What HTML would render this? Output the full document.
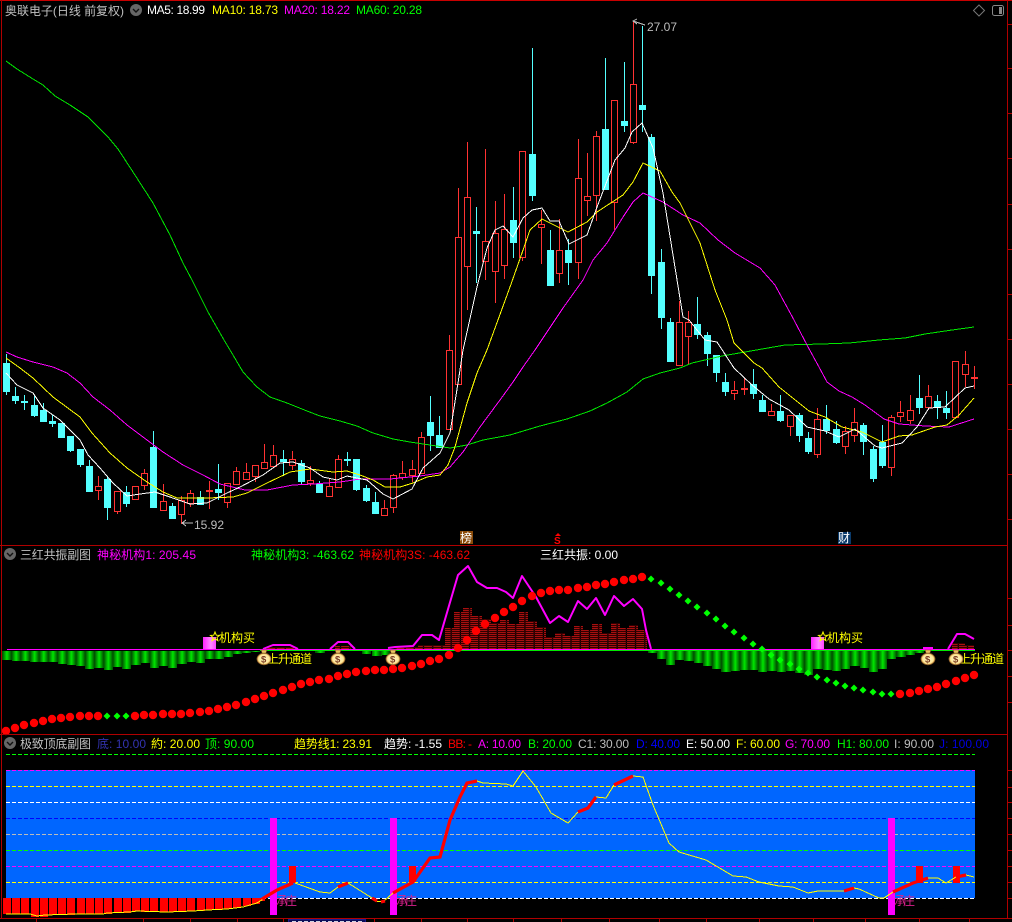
<!DOCTYPE html>
<html><head><meta charset="utf-8"><title>奥联电子</title>
<style>
html,body{margin:0;padding:0;background:#000;width:1012px;height:922px;overflow:hidden}
svg{display:block}
text{font-family:"Liberation Sans","Noto Sans CJK SC",sans-serif;font-size:12px}
</style></head><body>
<svg width="1012" height="922" viewBox="0 0 1012 922" xmlns="http://www.w3.org/2000/svg">
<defs>
<linearGradient id="gg"><stop offset="0" stop-color="#004c00"/><stop offset=".5" stop-color="#00e600"/><stop offset="1" stop-color="#004c00"/></linearGradient>
<pattern id="gp" patternUnits="userSpaceOnUse" x="2.3" y="0" width="9.22" height="10"><rect width="9.22" height="10" fill="url(#gg)"/></pattern>
<pattern id="rp" patternUnits="userSpaceOnUse" x="0" y="0" width="9.22" height="2"><rect width="8" height="1" fill="#a81010"/><rect y="1" width="9.22" height="1" fill="#300000"/></pattern>
<linearGradient id="pk"><stop offset="0" stop-color="#ff22ff"/><stop offset=".6" stop-color="#ff88ff"/><stop offset="1" stop-color="#ff44ff"/></linearGradient>
<radialGradient id="bag"><stop offset="0" stop-color="#fff4c8"/><stop offset=".75" stop-color="#ffe89a"/><stop offset="1" stop-color="#d8a040"/></radialGradient>
</defs>
<rect width="1012" height="922" fill="#000"/>

<!-- candles -->
<g shape-rendering="crispEdges">
<path fill="none" stroke="#ff3232" d="M98.5 476V500M117.5 491V514M144.5 469V490M163.5 484V510M181.5 496V524M190.5 490V507M209.5 481V509M227.5 483V508M236.5 467V485M246.5 463V480M255.5 465V482M264.5 444V468M273.5 445V466M292.5 451V470M310.5 466V486M329.5 479V497M338.5 455V487M384.5 500V515M393.5 474V513M402.5 461V480M412.5 460V482M421.5 432V473M449.5 335V429M458.5 188V384M467.5 142V310M485.5 149V280M495.5 201V303M504.5 194V279M522.5 151V261M541.5 210V264M559.5 219V283M578.5 139V279M587.5 153V216M596.5 131V221M614.5 100V230M633.5 22V144M679.5 301V365M688.5 311V365M734.5 381V400M744.5 378V395M771.5 404V416M790.5 415V436M817.5 408V458M845.5 426V454M854.5 408V442M891.5 415V476M900.5 401V422M910.5 395V424M928.5 385V410M965.5 351V387M974.5 366V389"/>
<path fill="#000" stroke="#ff3232" d="M95.5 486.5h6v4h-6zM114.5 454.5h0M114.5 491.5h6v20h-6zM132.5 486.5h6v13h-6zM141.5 473.5h6v12h-6zM160.5 501.5h6v9h-6zM178.5 500.5h6v14h-6zM187.5 493.5h6v10h-6zM224.5 483.5h6v19h-6zM233.5 471.5h6v13h-6zM243.5 472.5h6v7h-6zM252.5 465.5h6v11h-6zM261.5 462.5h6v6h-6zM270.5 455.5h6v11h-6zM289.5 459.5h6v6h-6zM307.5 480.5h6v3h-6zM326.5 486.5h6v10h-6zM335.5 459.5h6v28h-6zM381.5 508.5h6v7h-6zM390.5 475.5h6v32h-6zM399.5 473.5h6v4h-6zM409.5 469.5h6v6h-6zM418.5 437.5h6v36h-6zM446.5 350.5h6v79h-6zM455.5 237.5h6v147h-6zM464.5 197.5h6v69h-6zM482.5 241.5h6v20h-6zM492.5 233.5h6v38h-6zM501.5 229.5h6v36h-6zM519.5 151.5h6v106h-6zM538.5 224.5h6v3h-6zM556.5 250.5h6v23h-6zM575.5 178.5h6v84h-6zM584.5 196.5h6v4h-6zM593.5 136.5h6v59h-6zM611.5 100.5h6v102h-6zM630.5 84.5h6v58h-6zM676.5 322.5h6v43h-6zM685.5 322.5h6v14h-6zM731.5 390.5h6v3h-6zM768.5 411.5h6v4h-6zM787.5 415.5h6v11h-6zM814.5 419.5h6v35h-6zM842.5 431.5h6v15h-6zM851.5 422.5h6v13h-6zM888.5 417.5h6v50h-6zM897.5 412.5h6v4h-6zM907.5 410.5h6v10h-6zM925.5 396.5h6v11h-6zM952.5 361.5h6v56h-6zM962.5 364.5h6v10h-6z"/>
<path fill="#ff3232" d="M206 490h7v2h-7zM741 388h7v2h-7zM971 377h7v2h-7z"/>
<path fill="none" stroke="#54ffff" d="M6.5 354V395M15.5 387V404M24.5 395V410M34.5 396V417M43.5 403V422M52.5 415V427M70.5 436V452M80.5 449V467M89.5 460V492M107.5 476V520M126.5 486V507M153.5 431V508M172.5 503V519M200.5 491V505M218.5 464V500M283.5 450V476M301.5 460V484M319.5 481V493M347.5 452V466M356.5 459V491M366.5 485V502M375.5 492V514M430.5 396V451M439.5 416V448M476.5 207V283M513.5 187V258M532.5 48V201M550.5 230V286M568.5 239V285M605.5 58V190M624.5 62V132M642.5 26V132M651.5 134V294M661.5 249V329M670.5 318V362M697.5 297V339M707.5 332V366M716.5 355V382M725.5 373V396M753.5 369V399M762.5 395V412M780.5 395V422M799.5 413V442M808.5 432V454M826.5 405V434M836.5 421V444M863.5 423V455M873.5 446V482M882.5 425V468M919.5 375V414M937.5 395V419M946.5 391V419"/>
<path fill="#54ffff" d="M3 363h7v29h-7zM12 396h7v5h-7zM21 401h7v2h-7zM31 405h7v11h-7zM40 410h7v12h-7zM49 421h7v3h-7zM58 423h7v15h-7zM67 436h7v15h-7zM77 449h7v16h-7zM86 466h7v26h-7zM104 479h7v29h-7zM123 492h7v12h-7zM150 447h7v61h-7zM169 506h7v13h-7zM197 497h7v8h-7zM215 489h7v4h-7zM280 459h7v3h-7zM298 463h7v19h-7zM316 484h7v9h-7zM344 459h7v2h-7zM353 459h7v31h-7zM363 488h7v13h-7zM372 502h7v12h-7zM427 422h7v14h-7zM436 435h7v13h-7zM473 231h7v3h-7zM510 220h7v23h-7zM529 154h7v42h-7zM547 250h7v36h-7zM565 250h7v13h-7zM602 129h7v61h-7zM621 121h7v5h-7zM639 105h7v5h-7zM648 137h7v139h-7zM658 262h7v56h-7zM667 322h7v40h-7zM694 324h7v11h-7zM704 335h7v19h-7zM713 355h7v18h-7zM722 382h7v10h-7zM750 384h7v10h-7zM759 400h7v12h-7zM777 411h7v10h-7zM796 415h7v21h-7zM805 438h7v14h-7zM823 419h7v12h-7zM833 429h7v14h-7zM860 425h7v17h-7zM870 449h7v30h-7zM879 442h7v24h-7zM916 398h7v10h-7zM934 401h7v6h-7zM943 408h7v5h-7z"/>

<!-- MA lines -->
<g fill="none">
<path stroke="#00e800" d="M6 61L17 69L33 79L43 85L55 96L70 105L88 117L108 137L118 149L133 172L153 203L170 235L183 263L192 280L208 312L224 340L233 355L243 372L257 387L270 397L287 403L307 411L320 416L340 421L357 426L373 433L393 439L410 442L430 445L450 448L467 445L483 440L510 435L540 426L567 419L590 411L607 403L627 392L643 379L660 373L680 368L692 363L722 356L745 352L785 345L822 344L849 343L879 340L905 338L925 334L952 330L974 327"/>
<path stroke="#ff00ff" d="M6 352L17 357L33 362L53 367L67 373L80 383L93 397L110 410L127 425L147 440L163 452L183 465L203 475L220 484L245 490L267 490L293 485L313 484L340 482L360 479L390 479L420 476L440 473L450 467L463 452L480 427L500 400L513 382L523 367L535 350L563 308L583 280L593 260L607 243L623 217L633 202L643 193L663 202L683 215L700 223L718 240L735 253L760 268L775 285L794 320L807 345L819 367L827 382L839 391L852 397L865 405L884 419L899 424L925 426L949 427L974 419"/>
<path stroke="#ffff00" d="M6 358L20 368L33 378L53 397L80 417L92 433L110 453L127 468L147 482L163 492L177 498L207 498L233 497L247 493L267 483L290 472L310 469L333 472L347 471L360 475L373 480L385 487L400 487L413 483L427 477L440 475L448 465L455 447L467 403L477 373L487 350L510 287L522 253L530 230L542 219L568 232L587 222L597 212L623 195L633 182L643 163L660 171L672 192L680 203L700 243L715 290L727 320L734 343L754 363L762 368L779 387L799 403L809 411L825 417L842 427L862 432L882 442L899 436L912 435L935 427L947 425L959 415L974 398"/>
<path stroke="#fff" d="M6 373L17 385L33 393L43 408L60 420L80 440L88 455L100 468L113 483L127 496L140 494L155 492L170 497L190 504L207 503L227 493L240 487L263 475L280 463L293 462L310 468L323 477L337 480L347 476L367 480L383 494L393 499L412 489L423 468L440 453L450 433L458 383L463 350L477 287L487 248L495 230L503 226L513 237L523 218L532 210L542 208L550 221L559 221L569 244L587 235L597 207L615 160L625 148L632 132L642 123L653 148L663 193L683 317L689 320L705 340L717 342L734 368L752 385L769 399L789 410L807 427L825 431L839 437L855 429L875 446L882 448L902 443L917 427L929 408L945 407L965 388L974 386"/>
<path stroke="#bdbdbd" d="M182 523H193M186 520L182 523L186 526M645 25L633 21M637 19L633 21L637 24"/>
</g>
</g>

<text x="647" y="31" fill="#bdbdbd" textLength="30">27.07</text>
<text x="194" y="529" fill="#bdbdbd" textLength="30">15.92</text>

<!-- markers main -->
<rect x="460" y="531" width="13" height="13" fill="#8a4a08"/>
<text x="460" y="542" fill="#fff" font-size="12" style="font-size:12px">榜</text>
<path d="M558 533l3 3h-6z" fill="#f00"/>
<text x="554" y="544" fill="#f00" style="font-size:10px;font-weight:bold">S</text>
<rect x="838" y="532" width="13" height="12" fill="#0a3a6a"/>
<text x="838" y="542" fill="#fff" style="font-size:12px">财</text>

<!-- panel 1 header -->
<circle cx="136" cy="10" r="6" fill="#666"/><path d="M133 9l3 3 3-3" fill="none" stroke="#111" stroke-width="1.4"/>
<text x="5" y="15" fill="#c0c0c0" textLength="119">奥联电子(日线 前复权)</text>
<text x="147" y="14" fill="#fff" textLength="58">MA5: 18.99</text>
<text x="212" y="14" fill="#ff0" textLength="66">MA10: 18.73</text>
<text x="284" y="14" fill="#f0f" textLength="66">MA20: 18.22</text>
<text x="356" y="14" fill="#0f0" textLength="66">MA60: 20.28</text>
<path d="M979 5l5.5 5.5-5.5 5.5-5.5-5.5z" fill="none" stroke="#777"/>
<rect x="992.5" y="5.5" width="11" height="10" rx="2" fill="#000" stroke="#888"/><rect x="999" y="7" width="3" height="7" fill="#888"/>

<!-- panel 2 -->
<g shape-rendering="crispEdges">
<path fill="url(#rp)" d="M265 647h30v2h-30zM335 646h16v3h-16zM395 647h23v2h-23zM418 645h27v4h-27zM445 628h9v21h-9zM454 612h9v37h-9zM463 608h9v41h-9zM472 616h10v33h-10zM482 619h9v30h-9zM491 623h9v26h-9zM500 620h9v29h-9zM509 624h10v25h-10zM519 612h9v37h-9zM528 621h9v28h-9zM537 627h9v22h-9zM546 637h9v12h-9zM555 633h10v16h-10zM565 636h9v13h-9zM574 626h9v23h-9zM583 630h9v19h-9zM592 624h10v25h-10zM602 633h9v16h-9zM611 623h9v26h-9zM620 628h9v21h-9zM629 625h9v24h-9zM638 630h9v19h-9zM952 643h13v6h-13zM965 645h9v4h-9z"/>
<path fill="url(#gp)" d="M2 651h10v9h-10zM12 651h9v10h-9zM21 651h9v10h-9zM30 651h9v11h-9zM39 651h9v11h-9zM48 651h10v11h-10zM58 651h9v13h-9zM67 651h9v14h-9zM76 651h9v15h-9zM85 651h9v18h-9zM94 651h10v17h-10zM104 651h9v19h-9zM113 651h9v16h-9zM122 651h9v18h-9zM131 651h10v14h-10zM141 651h9v12h-9zM150 651h9v17h-9zM159 651h9v15h-9zM168 651h9v17h-9zM177 651h10v13h-10zM187 651h9v11h-9zM196 651h9v12h-9zM205 651h9v8h-9zM214 651h10v8h-10zM224 651h9v6h-9zM233 651h9v3h-9zM242 651h9v2h-9zM251 651h9v1h-9zM315 651h10v2h-10zM362 651h9v3h-9zM372 651h10v5h-10zM382 651h8v4h-8zM648 651h9v2h-9zM657 651h9v8h-9zM666 651h9v14h-9zM675 651h9v9h-9zM684 651h10v10h-10zM694 651h9v12h-9zM703 651h9v15h-9zM712 651h9v18h-9zM721 651h10v21h-10zM731 651h9v20h-9zM740 651h9v19h-9zM749 651h9v19h-9zM758 651h9v21h-9zM767 651h10v20h-10zM777 651h9v21h-9zM786 651h9v20h-9zM795 651h9v22h-9zM804 651h9v24h-9zM813 651h10v18h-10zM823 651h9v19h-9zM832 651h9v20h-9zM841 651h9v18h-9zM850 651h10v15h-10zM860 651h9v17h-9zM869 651h9v21h-9zM878 651h9v18h-9zM887 651h9v8h-9zM896 651h10v6h-10zM906 651h9v4h-9zM915 651h9v2h-9z"/>
<path stroke="#00e800" d="M260 650.5H975"/>
<path stroke="#f0f" d="M7 649.5H975"/>
<rect x="203" y="637" width="13" height="12" fill="url(#pk)"/>
<rect x="811" y="637" width="13" height="12" fill="url(#pk)"/>
</g>
<path fill="none" stroke="#f0f" stroke-width="2" stroke-linejoin="round" d="M263 649L273 645L290 645L298 649M330 649L338 642L348 642L355 649M388 648L395 647L413 646L422 635L432 635L439 640L458 575L468 566L477 582L487 588L497 588L506 592L513 598L522 576L536 597L550 623L559 616L568 622L578 601L587 609L596 598L605 615L614 596L624 606L633 599L642 609L646 630L651 649M948 649L957 634L965 634L974 639M923 648H933"/>
<path fill="none" stroke="#f00" stroke-width="8.4" stroke-linecap="round" d="M6 731h0M15 728h0M24 725h0M34 723h0M43 721h0M52 719h0M61 718h0M70 717h0M80 716h0M89 716h0M98 716h0M135 716h0M144 715h0M153 715h0M163 714h0M172 714h0M181 714h0M190 713h0M200 712h0M209 711h0M218 709h0M227 707h0M236 705h0M246 702h0M255 699h0M264 696h0M273 693h0M283 690h0M292 687h0M301 684h0M310 682h0M319 680h0M329 679h0M338 676h0M347 674h0M356 672h0M366 671h0M375 670h0M384 670h0M393 669h0M402 668h0M412 666h0M421 664h0M430 661h0M439 659h0M449 655h0M458 648h0M467 640h0M476 631h0M485 624h0M495 618h0M504 612h0M513 607h0M522 601h0M532 596h0M541 593h0M550 591h0M559 590h0M568 590h0M578 588h0M587 587h0M596 585h0M605 584h0M614 582h0M624 580h0M633 579h0M642 577h0M900 694h0M910 693h0M919 691h0M928 689h0M937 687h0M946 684h0M956 681h0M965 678h0M974 675h0"/>
<path fill="#0f0" d="M107 712.500l3.500 3.500-3.500 3.500-3.500-3.500zM117 712.500l3.500 3.500-3.500 3.500-3.500-3.500zM126 712.500l3.500 3.500-3.500 3.500-3.500-3.500zM651 575.500l3.500 3.500-3.500 3.500-3.500-3.500zM661 579.500l3.500 3.500-3.500 3.500-3.500-3.500zM670 585.500l3.500 3.500-3.500 3.500-3.500-3.500zM679 591.500l3.500 3.500-3.500 3.500-3.500-3.500zM688 597.500l3.500 3.500-3.500 3.500-3.500-3.500zM697 603.500l3.500 3.500-3.500 3.500-3.500-3.500zM707 609.500l3.500 3.500-3.500 3.500-3.500-3.500zM716 615.500l3.500 3.500-3.500 3.500-3.500-3.500zM725 622.500l3.500 3.500-3.500 3.500-3.500-3.500zM734 628.500l3.500 3.500-3.500 3.500-3.500-3.500zM744 634.500l3.500 3.500-3.500 3.500-3.500-3.500zM753 640.500l3.500 3.500-3.500 3.500-3.500-3.500zM762 645.500l3.500 3.500-3.500 3.500-3.500-3.500zM771 651.500l3.500 3.500-3.500 3.500-3.500-3.500zM780 656.500l3.500 3.500-3.500 3.500-3.500-3.500zM790 660.500l3.500 3.500-3.500 3.500-3.500-3.500zM799 665.500l3.500 3.500-3.500 3.500-3.500-3.500zM808 669.500l3.500 3.500-3.500 3.500-3.500-3.500zM817 673.500l3.500 3.500-3.500 3.500-3.500-3.500zM827 676.500l3.500 3.500-3.500 3.500-3.500-3.500zM836 679.500l3.500 3.500-3.500 3.500-3.500-3.500zM845 682.500l3.500 3.500-3.500 3.500-3.500-3.500zM854 684.500l3.500 3.500-3.500 3.500-3.500-3.500zM863 686.500l3.500 3.500-3.500 3.500-3.500-3.500zM873 688.500l3.500 3.500-3.500 3.500-3.500-3.500zM882 690.500l3.500 3.500-3.500 3.500-3.500-3.500zM891 690.500l3.500 3.500-3.500 3.500-3.500-3.500z"/>

<text x="219" y="642" fill="#ff0" textLength="36">机构买</text>
<text x="827" y="642" fill="#ff0" textLength="36">机构买</text>
<path d="M215 632l1.3 3.2 3.2.2-2.5 2 .9 3.2-2.9-1.8-2.9 1.8.9-3.2-2.5-2 3.2-.2z" fill="none" stroke="#ff0"/>
<path d="M823 632l1.3 3.2 3.2.2-2.5 2 .9 3.2-2.9-1.8-2.9 1.8.9-3.2-2.5-2 3.2-.2z" fill="none" stroke="#ff0"/>
<text x="267" y="663" fill="#ff0" textLength="45">上升通道</text>
<text x="959" y="663" fill="#ff0" textLength="45">上升通道</text>

<g transform="translate(264,657)"><path d="M-3-7h6l-1.500 4h-3z" fill="#e8c060" stroke="#7a5020" stroke-width=".6"/><ellipse cy="2" rx="7" ry="5.800" fill="url(#bag)" stroke="#8a5a28" stroke-width=".8"/><text x="-3" y="5.300" fill="#7a3a20" style="font-size:9.500px;font-weight:bold">$</text></g>
<g transform="translate(338,657)"><path d="M-3-7h6l-1.500 4h-3z" fill="#e8c060" stroke="#7a5020" stroke-width=".6"/><ellipse cy="2" rx="7" ry="5.800" fill="url(#bag)" stroke="#8a5a28" stroke-width=".8"/><text x="-3" y="5.300" fill="#7a3a20" style="font-size:9.500px;font-weight:bold">$</text></g>
<g transform="translate(393,657)"><path d="M-3-7h6l-1.500 4h-3z" fill="#e8c060" stroke="#7a5020" stroke-width=".6"/><ellipse cy="2" rx="7" ry="5.800" fill="url(#bag)" stroke="#8a5a28" stroke-width=".8"/><text x="-3" y="5.300" fill="#7a3a20" style="font-size:9.500px;font-weight:bold">$</text></g>
<g transform="translate(928,657)"><path d="M-3-7h6l-1.500 4h-3z" fill="#e8c060" stroke="#7a5020" stroke-width=".6"/><ellipse cy="2" rx="7" ry="5.800" fill="url(#bag)" stroke="#8a5a28" stroke-width=".8"/><text x="-3" y="5.300" fill="#7a3a20" style="font-size:9.500px;font-weight:bold">$</text></g>
<g transform="translate(956,657)"><path d="M-3-7h6l-1.500 4h-3z" fill="#e8c060" stroke="#7a5020" stroke-width=".6"/><ellipse cy="2" rx="7" ry="5.800" fill="url(#bag)" stroke="#8a5a28" stroke-width=".8"/><text x="-3" y="5.300" fill="#7a3a20" style="font-size:9.500px;font-weight:bold">$</text></g>

<circle cx="10" cy="554" r="6" fill="#666"/><path d="M7 553l3 3 3-3" fill="none" stroke="#111" stroke-width="1.4"/>
<text x="20" y="559" fill="#c0c0c0" textLength="71">三红共振副图</text>
<text x="97" y="559" fill="#f0f" textLength="99">神秘机构1: 205.45</text>
<text x="251" y="559" fill="#0f0" textLength="103">神秘机构3: -463.62</text>
<text x="359" y="559" fill="#f00" textLength="111">神秘机构3S: -463.62</text>
<text x="540" y="559" fill="#fff" textLength="78">三红共振: 0.00</text>

<!-- panel 3 -->
<g shape-rendering="crispEdges">
<rect x="6" y="770" width="969" height="128" fill="#0066ff"/>
<g fill="none" stroke-dasharray="4 2">
<path stroke="#0f0" d="M6 754.5H975"/>
<path stroke="#f0f" d="M6 770.5H975"/>
<path stroke="#ff0" d="M6 786.5H975"/>
<path stroke="#fff" d="M6 802.5H975"/>
<path stroke="#00f" d="M6 818.5H975"/>
<path stroke="#bbb" d="M6 834.5H975"/>
<path stroke="#0f0" d="M6 850.5H975"/>
<path stroke="#f0f" d="M6 866.5H975"/>
<path stroke="#ff0" d="M6 882.5H975"/>
<path stroke="#fff" d="M262 898.5H975"/>
</g>
<path fill="#f00" d="M3 898h8v16h-8zM12 898h8v16h-8zM21 898h8v16h-8zM31 898h8v19h-8zM40 898h8v19h-8zM49 898h8v17h-8zM58 898h8v17h-8zM67 898h8v17h-8zM77 898h8v16h-8zM86 898h8v16h-8zM95 898h8v16h-8zM104 898h8v16h-8zM114 898h8v15h-8zM123 898h8v15h-8zM132 898h8v13h-8zM141 898h8v14h-8zM150 898h8v14h-8zM160 898h8v14h-8zM169 898h8v14h-8zM178 898h8v14h-8zM187 898h8v13h-8zM197 898h8v13h-8zM206 898h8v12h-8zM215 898h8v12h-8zM224 898h8v11h-8zM233 898h8v10h-8zM243 898h8v8h-8zM252 898h8v6h-8zM258 898h7v3h-7z"/>
<path fill="#f0f" d="M270 818h7v97h-7zM390 818h7v97h-7zM888 818h7v97h-7z"/>
<path fill="#f00" d="M289 866h7v17h-7zM409 866h7v10l-1 6h-6zM916 866h7v17h-7zM953 866h7v17h-7z"/>
<path fill="none" stroke="#ff0" d="M6 914L30 914L37 916L45 915L75 914L103 914L107 913L130 912L137 911L167 912L193 911L207 910L227 909L243 907L257 903L265 898M295 883L320 892L330 893L338 887M348 883L372 898L375 901L383 902L393 893M477 781L483 783L506 784L513 786L523 771L536 787L551 813L568 823L578 812M596 797L606 798L614 785M633 776L643 777L653 805L669 843L679 852L706 860L733 876L746 877L759 882L779 886L793 887L808 893L818 891L844 891M854 888L859 889L879 898L884 898L893 892M928 878L938 878L946 883L956 877M966 875L974 877"/>
</g>
<path fill="none" stroke="#f00" stroke-width="3.2" d="M262 899L277 890L293 883M338 887L348 883M372 898L377 901M381 902L385 901M393 893L413 882L430 858L440 857L450 820L460 797L467 783L477 781M578 812L588 808L596 797M614 785L633 776M844 891L854 888M893 892L913 883L928 878M956 877L966 875"/>
<path fill="none" stroke="#f00" stroke-width="4" d="M411 877L415 882"/>
<text x="276" y="905" fill="#d8208c" style="font-size:12px" textLength="21">承庄</text>
<text x="396" y="905" fill="#d8208c" style="font-size:12px" textLength="21">承庄</text>
<text x="894" y="905" fill="#d8208c" style="font-size:12px" textLength="21">承庄</text>

<circle cx="10" cy="743" r="6" fill="#666"/><path d="M7 742l3 3 3-3" fill="none" stroke="#111" stroke-width="1.4"/>
<text x="20" y="748" fill="#c0c0c0" textLength="71">极致顶底副图</text>
<text x="97" y="748" fill="#3333b0" textLength="49">底: 10.00</text>
<text x="151" y="748" fill="#ff0" textLength="49">約: 20.00</text>
<text x="205" y="748" fill="#0f0" textLength="49">顶: 90.00</text>
<text x="294" y="748" fill="#ff0" textLength="78">趋势线1: 23.91</text>
<text x="384" y="748" fill="#fff" textLength="58">趋势: -1.55</text>
<text x="448" y="748" fill="#f00" textLength="24">BB: -</text>
<text x="478" y="748" fill="#f0f" textLength="43">A: 10.00</text>
<text x="528" y="748" fill="#0f0" textLength="44">B: 20.00</text>
<text x="578" y="748" fill="#bdbdbd" textLength="51">C1: 30.00</text>
<text x="636" y="748" fill="#0000ff" textLength="44">D: 40.00</text>
<text x="686" y="748" fill="#fff" textLength="44">E: 50.00</text>
<text x="736" y="748" fill="#ff0" textLength="44">F: 60.00</text>
<text x="785" y="748" fill="#f0f" textLength="45">G: 70.00</text>
<text x="837" y="748" fill="#0f0" textLength="52">H1: 80.00</text>
<text x="894" y="748" fill="#bdbdbd" textLength="40">I: 90.00</text>
<text x="939" y="748" fill="#0000e0" textLength="50">J: 100.00</text>

<!-- frame -->
<g shape-rendering="crispEdges" fill="none" stroke="#b00000">
<path stroke="#c80000" d="M0 .5H1012"/>
<path d="M1.5 0V918"/>
<path d="M1007.5 0V918"/>
<path d="M0 545.5H1007M0 734.5H1007M0 918.5H1012"/>
<path d="M1007 24.5h5M1007 68.5h5M1007 113.5h5M1007 158.5h5M1007 204.5h5M1007 249.5h5M1007 294.5h5M1007 339.5h5M1007 384.5h5M1007 429.5h5M1007 474.5h5M1007 519.5h5M1007 598.5h5M1007 625.5h5M1007 650.5h5M1007 676.5h5M1007 702.5h5M1007 770.5h5M1007 787.5h5M1007 802.5h5M1007 818.5h5M1007 834.5h5M1007 850.5h5M1007 866.5h5M1007 882.5h5M1007 898.5h5"/>
<path d="M36.5 918v4M143.5 918v4M190.5 918v4M237.5 918v4M283.5 918v4M374.5 918v4M421.5 918v4M467.5 918v4M513.5 918v4M561.5 918v4M609.5 918v4M659.5 918v4M706.5 918v4M759.5 918v4M813.5 918v4M865.5 918v4M919.5 918v4M969.5 918v4"/>
</g>
<rect x="288.500" y="919.500" width="77" height="4" fill="#0c0c58" stroke="#1a1a90"/>
<path d="M292 921.500h70" stroke="#d0d0e0" stroke-dasharray="4 2" shape-rendering="crispEdges"/>
</svg>
</body></html>
